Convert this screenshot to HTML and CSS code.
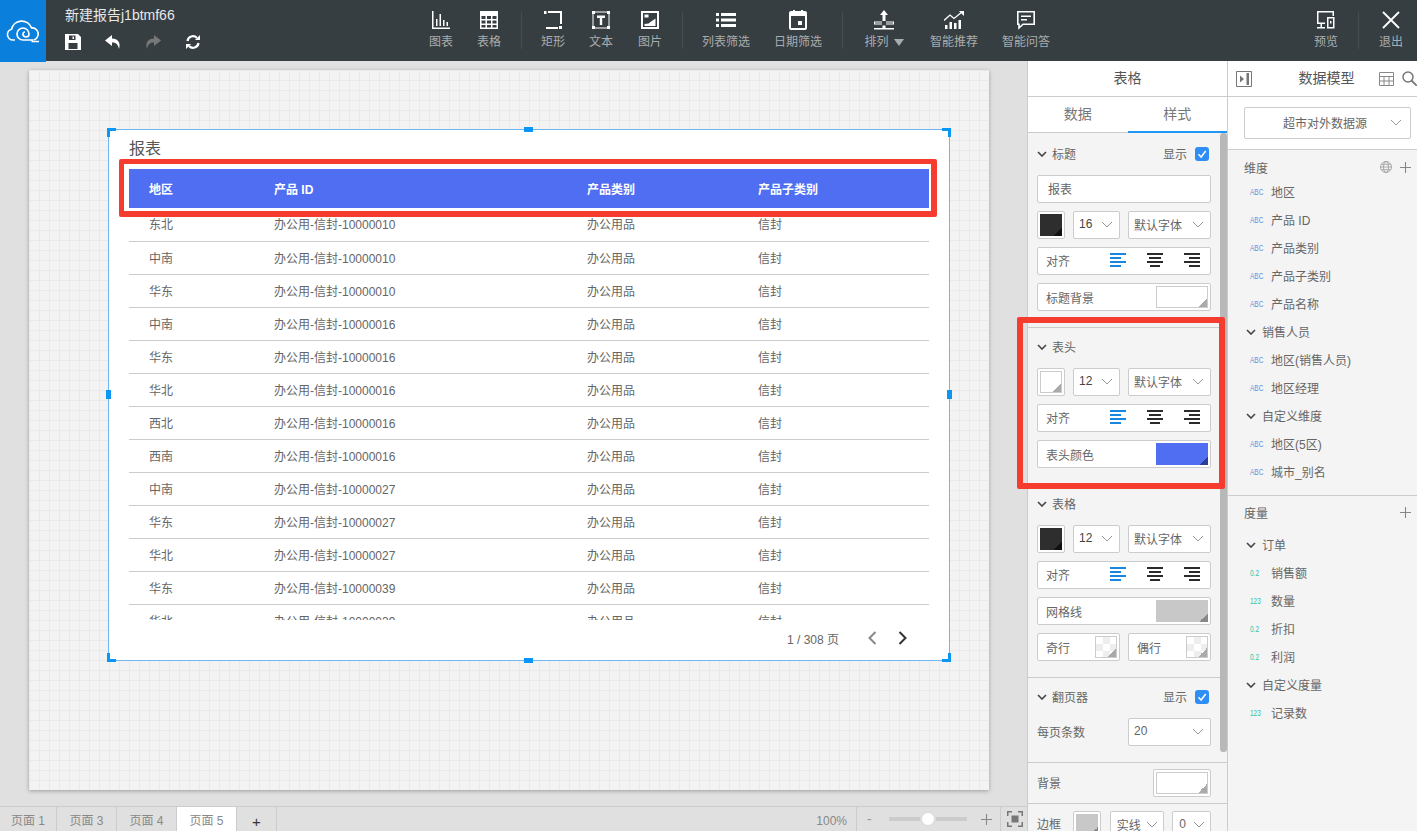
FILE: index.html
```html
<!DOCTYPE html>
<html lang="zh-CN">

<head>
  <meta charset="UTF-8">
  <title>新建报告j1btmf66</title>
  <link rel="stylesheet" href="styles.css">
</head>

<body>
  <!-- shared small icons -->
  <svg class="defs" width="0" height="0">
    <symbol id="chev" viewBox="0 0 12 7"><path d="M1 1l5 5 5-5" fill="none" stroke="#999" stroke-width="1"/></symbol>
    <symbol id="fold" viewBox="0 0 10 6"><path d="M1 1l4 4 4-4" fill="none" stroke="#444" stroke-width="1.6"/></symbol>
    <symbol id="al" viewBox="0 0 16 14"><path d="M0 0h16v2H0zM0 4h11v2H0zM0 8h16v2H0zM0 12h11v2H0z" fill="#1a86e0"/></symbol>
    <symbol id="ac" viewBox="0 0 16 14"><path d="M0 0h16v2H0zM2 4h12v2H2zM0 8h16v2H0zM3 12h10v2H3z" fill="#2b2b2b"/></symbol>
    <symbol id="ar" viewBox="0 0 16 14"><path d="M0 0h16v2H0zM5 4h11v2H5zM0 8h16v2H0zM5 12h11v2H5z" fill="#2b2b2b"/></symbol>
    <symbol id="tick" viewBox="0 0 14 14"><path d="M3.5 7.2l2.6 2.8 4.6-6" fill="none" stroke="#fff" stroke-width="1.5"/></symbol>
    <symbol id="plus" viewBox="0 0 13 13"><path d="M6.5 0v13M0 6.500h13" stroke="#888" stroke-width="1.300"/></symbol>
  </svg>

  <header class="topbar">
    <div class="logo">
      <svg width="34" height="24" viewBox="0 0 34 24" fill="none" stroke="#fff" stroke-width="1.700">
        <path d="M9 21H7A5.500 5.500 0 0 1 5.500 10.200 A10.500 10.500 0 0 1 25.500 8.800 A6.200 6.200 0 0 1 27.500 21"/>
        <path d="M33 22.500H25.500M27 21H17A6 6 0 1 1 23 15c0 1.900-1.400 3-3 3-1.800 0-3-1.300-3-2.900 0-1.300.9-2.100 2-2.100"/>
      </svg>
    </div>
    <div class="doc">
      <div class="doc-title">新建报告j1btmf66</div>
      <div class="doc-actions">
        <svg width="16" height="16" viewBox="0 0 16 16"><path d="M0 0h13l3 3v13H0z" fill="#fff"/><path d="M4 1.500h6.500v4.500H4zM3.500 9h9v6h-9z" fill="#363e42"/><path d="M7.500 2.500h1.500v2.500H7.500z" fill="#fff"/></svg>
        <svg width="16" height="16" viewBox="0 0 16 16"><path d="M7 1L0 6.500 7 12V8.500c4 0 6 1.500 7 6.500 2-6-1-10.500-7-10.500z" fill="#fff"/></svg>
        <svg width="16" height="16" viewBox="0 0 16 16"><path d="M9 1l7 5.500L9 12V8.500c-4 0-6 1.500-7 6.500C0 9 3 4.500 9 4.500z" fill="#777"/></svg>
        <svg width="16" height="16" viewBox="0 0 16 16" fill="none" stroke="#fff" stroke-width="2.200"><path d="M2.500 7a5.500 5.500 0 0 1 9.500-3M13.500 9a5.500 5.500 0 0 1-9.500 3"/><path d="M15 1v5h-5z M1 15v-5h5z" fill="#fff" stroke="none"/></svg>
      </div>
    </div>

    <div class="tool"><svg width="18" height="18" viewBox="0 0 18 18" fill="#fff"><path d="M0 0h1.500v16.500H18V18H0z"/><path d="M4 8h1.500v7H4zM7.500 3H9v12H7.500zM11 9h1.500v6H11zM14.500 11H16v4h-1.500z"/></svg><span>图表</span></div>
    <div class="tool"><svg width="18" height="18" viewBox="0 0 18 18"><path d="M0 0h18v18H0z" fill="#fff"/><path d="M1.500 5h4v3h-4zM7 5h4v3H7zM12.500 5h4v3h-4zM1.500 9.500h4v3h-4zM7 9.500h4v3H7zM12.500 9.500h4v3h-4zM1.500 14h4v2.500h-4zM7 14h4v2.500H7zM12.500 14h4v2.500h-4z" fill="#363e42"/></svg><span>表格</span></div>
    <i class="tool-sep"></i>
    <div class="tool"><svg width="18" height="18" viewBox="0 0 18 18" fill="#fff"><path d="M0 0h2.500v3H0zM0 4h2v14h12v-2H2V4zM4 0h14v13h-2V2H4zM15 15h3v3h-3z"/></svg><span>矩形</span></div>
    <div class="tool"><svg width="18" height="18" viewBox="0 0 18 18" fill="#fff"><path d="M1 1h16v16H1z" fill="none" stroke="#fff"/><path d="M0 0h3v3H0zM15 0h3v3h-3zM0 15h3v3H0zM15 15h3v3h-3zM5 4.500h8v2.500h-2.800v7H7.800V7H5z"/></svg><span>文本</span></div>
    <div class="tool tool-img"><svg width="18" height="18" viewBox="0 0 18 18"><path d="M0 0h18v18H0z" fill="#fff"/><path d="M2 2h14v14H2z" fill="#363e42"/><path d="M3.500 3.500h4v3h-4zM3.500 15h11V7.500l-5 3.500-2 1.500-4 .5z" fill="#fff"/></svg><span>图片</span></div>
    <i class="tool-sep"></i>
    <div class="tool tool-wide"><svg width="20" height="16" viewBox="0 0 20 16" fill="#fff"><path d="M0 1h3v3H0zM5 1h15v3H5zM0 6.500h3v3H0zM5 6.500h15v3H5zM0 12h3v3H0zM5 12h15v3H5z"/></svg><span>列表筛选</span></div>
    <div class="tool tool-wide"><svg width="18" height="20" viewBox="0 0 18 20"><path d="M2 1h2V0h2v1h6V0h2v1h2a2 2 0 0 1 2 2v15a2 2 0 0 1-2 2H2a2 2 0 0 1-2-2V3a2 2 0 0 1 2-2z" fill="#fff"/><path d="M2 6h14v12H2z" fill="#363e42"/><path d="M9 11h4v4H9z" fill="#fff"/></svg><span>日期筛选</span></div>
    <i class="tool-sep"></i>
    <div class="tool tool-sort"><svg width="20" height="20" viewBox="0 0 20 20" fill="#fff"><path d="M10 0l4 5h-2.500v6h-3V5H6zM0 11.500h8v1H1v1h7v1H0zM12 11.500h8v3h-8v-1h7v-1h-7zM8.500 15.500h3V18h8.500v1.500H0V18h8.500z"/></svg><span>排列<b class="caret"></b></span></div>
    <div class="tool tool-wide"><svg width="20" height="18" viewBox="0 0 20 18" fill="#fff"><path d="M1 14h2.500v4H1zM5.500 11H8v7H5.500zM10 12h2.500v6H10zM14.500 9H17v9h-2.500z"/><path d="M0 9.500l6-5.500 4 3.500L18 1" fill="none" stroke="#fff" stroke-width="1.300"/><path d="M15 0h5v5z"/></svg><span>智能推荐</span></div>
    <div class="tool tool-wide"><svg width="18" height="18" viewBox="0 0 18 18"><path d="M.8.800h16.400v12.400H6L2 17v-3.800H.8z" fill="none" stroke="#fff" stroke-width="1.600"/><path d="M4 4.500h10V6H4zM4 8h6v1.500H4z" fill="#fff"/></svg><span>智能问答</span></div>

    <div class="tool tool-preview"><svg width="18" height="18" viewBox="0 0 18 18" fill="#fff"><path d="M0 0h17v5h-1.500V1.500h-14v10H8V13H5v3h3v1.500H0V16h3.500v-3H0z"/><path d="M10 6h7.500v11.500H10zM11.500 7.500v8.500H16V7.500z"/><path d="M13 10h1.500v2.500H13z"/></svg><span>预览</span></div>
    <i class="tool-sep tool-sep-last"></i>
    <div class="tool tool-exit"><svg width="18" height="18" viewBox="0 0 18 18"><path d="M1 1l16 16M17 1L1 17" stroke="#fff" stroke-width="1.800"/></svg><span>退出</span></div>
  </header>

  <main class="main">
    <section class="workspace">
      <div class="stage">
        <div class="paper">
          <div class="widget">
            <i class="corner corner-tl"></i><i class="corner corner-tr"></i><i class="corner corner-bl"></i><i class="corner corner-br"></i>
            <i class="grip grip-t"></i><i class="grip grip-b"></i><i class="grip grip-l"></i><i class="grip grip-r"></i>
            <h2 class="report-title">报表</h2>
            <div class="table-clip">
              <table class="report">
                <colgroup><col class="c1"><col class="c2"><col class="c3"><col class="c4"></colgroup>
                <thead>
                  <tr><th>地区</th><th>产品 ID</th><th>产品类别</th><th>产品子类别</th></tr>
                </thead>
                <tbody>
                  <tr><td>东北</td><td>办公用-信封-10000010</td><td>办公用品</td><td>信封</td></tr>
                  <tr><td>中南</td><td>办公用-信封-10000010</td><td>办公用品</td><td>信封</td></tr>
                  <tr><td>华东</td><td>办公用-信封-10000010</td><td>办公用品</td><td>信封</td></tr>
                  <tr><td>中南</td><td>办公用-信封-10000016</td><td>办公用品</td><td>信封</td></tr>
                  <tr><td>华东</td><td>办公用-信封-10000016</td><td>办公用品</td><td>信封</td></tr>
                  <tr><td>华北</td><td>办公用-信封-10000016</td><td>办公用品</td><td>信封</td></tr>
                  <tr><td>西北</td><td>办公用-信封-10000016</td><td>办公用品</td><td>信封</td></tr>
                  <tr><td>西南</td><td>办公用-信封-10000016</td><td>办公用品</td><td>信封</td></tr>
                  <tr><td>中南</td><td>办公用-信封-10000027</td><td>办公用品</td><td>信封</td></tr>
                  <tr><td>华东</td><td>办公用-信封-10000027</td><td>办公用品</td><td>信封</td></tr>
                  <tr><td>华北</td><td>办公用-信封-10000027</td><td>办公用品</td><td>信封</td></tr>
                  <tr><td>华东</td><td>办公用-信封-10000039</td><td>办公用品</td><td>信封</td></tr>
                  <tr><td>华北</td><td>办公用-信封-10000039</td><td>办公用品</td><td>信封</td></tr>
                </tbody>
              </table>
            </div>
            <div class="pager">
              <span>1 / 308 页</span>
              <svg class="pager-prev" width="10" height="14" viewBox="0 0 10 14"><path d="M8.500 1l-6 6 6 6" fill="none" stroke="#888" stroke-width="2"/></svg>
              <svg class="pager-next" width="10" height="14" viewBox="0 0 10 14"><path d="M1.500 1l6 6-6 6" fill="none" stroke="#333" stroke-width="2"/></svg>
            </div>
          </div>
        </div>
      </div>
      <footer class="pages">
        <div class="page-tab">页面 1</div>
        <div class="page-tab">页面 3</div>
        <div class="page-tab">页面 4</div>
        <div class="page-tab page-on">页面 5</div>
        <div class="page-tab page-add">+</div>
        <div class="zoom-pct">100%</div>
        <div class="zoom-bar">
          <span class="zoom-sign">-</span>
          <div class="slider"><i class="knob"></i></div>
          <svg width="11" height="11"><use href="#plus"/></svg>
        </div>
        <div class="zoom-fit">
          <svg width="16" height="16" viewBox="0 0 16 16" fill="#777"><path d="M0 0h5v1.500H1.500V5H0zM11 0h5v5h-1.500V1.500H11zM0 11h1.500v3.500H5V16H0zM14.500 11H16v5h-5v-1.500h3.500zM4.500 4.500h7v7h-7z"/></svg>
        </div>
      </footer>
    </section>

    <aside class="props">
      <div class="panel-head">表格</div>
      <div class="tabs">
        <div class="tab">数据</div>
        <div class="tab tab-on">样式</div>
      </div>
      <div class="props-body">
        <i class="scroll"></i>

        <section class="group group-first">
          <div class="group-head">
            <svg class="fold" width="10" height="6"><use href="#fold"/></svg>标题
            <span class="show">显示</span><svg class="check" width="14" height="14"><use href="#tick"/></svg>
          </div>
          <div class="field field-text">报表</div>
          <div class="line">
            <div class="swatch"><i class="chip chip-dark"></i></div>
            <div class="field field-size">16<svg width="12" height="7"><use href="#chev"/></svg></div>
            <div class="field field-font">默认字体<svg width="12" height="7"><use href="#chev"/></svg></div>
          </div>
          <div class="field field-align">对齐
            <span class="aligns">
              <svg width="16" height="14"><use href="#al"/></svg>
              <svg width="16" height="14"><use href="#ac"/></svg>
              <svg width="16" height="14"><use href="#ar"/></svg>
            </span>
          </div>
          <div class="field field-color">标题背景<i class="chip chip-wide chip-white"></i></div>
        </section>

        <section class="group">
          <div class="group-head">
            <svg class="fold" width="10" height="6"><use href="#fold"/></svg>表头
          </div>
          <div class="line">
            <div class="swatch"><i class="chip chip-white"></i></div>
            <div class="field field-size">12<svg width="12" height="7"><use href="#chev"/></svg></div>
            <div class="field field-font">默认字体<svg width="12" height="7"><use href="#chev"/></svg></div>
          </div>
          <div class="field field-align">对齐
            <span class="aligns">
              <svg width="16" height="14"><use href="#al"/></svg>
              <svg width="16" height="14"><use href="#ac"/></svg>
              <svg width="16" height="14"><use href="#ar"/></svg>
            </span>
          </div>
          <div class="field field-color">表头颜色<i class="chip chip-wide chip-blue"></i></div>
        </section>

        <section class="group">
          <div class="group-head">
            <svg class="fold" width="10" height="6"><use href="#fold"/></svg>表格
          </div>
          <div class="line">
            <div class="swatch"><i class="chip chip-dark"></i></div>
            <div class="field field-size">12<svg width="12" height="7"><use href="#chev"/></svg></div>
            <div class="field field-font">默认字体<svg width="12" height="7"><use href="#chev"/></svg></div>
          </div>
          <div class="field field-align">对齐
            <span class="aligns">
              <svg width="16" height="14"><use href="#al"/></svg>
              <svg width="16" height="14"><use href="#ac"/></svg>
              <svg width="16" height="14"><use href="#ar"/></svg>
            </span>
          </div>
          <div class="field field-color">网格线<i class="chip chip-wide chip-grey"></i></div>
          <div class="line">
            <div class="field field-half">奇行<i class="chip chip-check"></i></div>
            <div class="field field-half">偶行<i class="chip chip-check"></i></div>
          </div>
        </section>

        <section class="group">
          <div class="group-head">
            <svg class="fold" width="10" height="6"><use href="#fold"/></svg>翻页器
            <span class="show">显示</span><svg class="check" width="14" height="14"><use href="#tick"/></svg>
          </div>
          <div class="line line-between">
            <span class="plain">每页条数</span>
            <div class="field field-font">20<svg width="12" height="7"><use href="#chev"/></svg></div>
          </div>
        </section>

        <section class="group group-tight">
          <div class="line line-between">
            <span class="plain">背景</span>
            <div class="swatch swatch-wide"><i class="chip chip-white"></i></div>
          </div>
        </section>

        <section class="group group-tight group-last">
          <div class="line">
            <span class="plain plain-border">边框</span>
            <div class="swatch"><i class="chip chip-grey"></i></div>
            <div class="field field-style">实线<svg width="12" height="7"><use href="#chev"/></svg></div>
            <div class="field field-width">0<svg width="12" height="7"><use href="#chev"/></svg></div>
          </div>
        </section>
      </div>
    </aside>

    <aside class="model">
      <div class="panel-head model-head">
        <svg class="model-toggle" width="16" height="16" viewBox="0 0 16 16"><path d="M.5.500h15v15H.5z" fill="none" stroke="#777"/><path d="M4 4.500l4 3.500-4 3.500zM10.500 2H13v12h-2.500z" fill="#777"/></svg>
        <span class="model-title">数据模型</span>
        <svg class="model-grid" width="15" height="14" viewBox="0 0 15 14"><path d="M.5.500h14v13H.5zM.5 4.500h14M.5 9h14M5 4.500V13.500M10 4.500V13.500" fill="none" stroke="#888"/></svg>
        <svg class="model-search" width="15" height="15" viewBox="0 0 15 15"><circle cx="6" cy="6" r="5" fill="none" stroke="#777" stroke-width="1.500"/><path d="M9.500 9.500L15 15" stroke="#777" stroke-width="1.800"/></svg>
      </div>
      <div class="source">
        <div class="source-select">超市对外数据源<svg width="12" height="7"><use href="#chev"/></svg></div>
      </div>
      <section class="tree tree-dim">
        <div class="tree-head">维度
          <svg class="globe" width="12" height="12" viewBox="0 0 12 12"><g fill="none" stroke="#999" stroke-width=".8"><circle cx="6" cy="6" r="5.500"/><ellipse cx="6" cy="6" rx="2.500" ry="5.500"/><path d="M.5 6h11M1.300 3.300h9.400M1.300 8.700h9.400"/></g></svg>
          <svg width="11" height="11"><use href="#plus"/></svg>
        </div>
        <div class="leaf"><i class="abc">ABC</i>地区</div>
        <div class="leaf"><i class="abc">ABC</i>产品 ID</div>
        <div class="leaf"><i class="abc">ABC</i>产品类别</div>
        <div class="leaf"><i class="abc">ABC</i>产品子类别</div>
        <div class="leaf"><i class="abc">ABC</i>产品名称</div>
        <div class="branch"><svg width="10" height="6"><use href="#fold"/></svg>销售人员</div>
        <div class="leaf"><i class="abc">ABC</i>地区(销售人员)</div>
        <div class="leaf"><i class="abc">ABC</i>地区经理</div>
        <div class="branch"><svg width="10" height="6"><use href="#fold"/></svg>自定义维度</div>
        <div class="leaf"><i class="abc">ABC</i>地区(5区)</div>
        <div class="leaf"><i class="abc">ABC</i>城市_别名</div>
      </section>
      <section class="tree tree-measure">
        <div class="tree-head">度量
          <svg width="11" height="11"><use href="#plus"/></svg>
        </div>
        <div class="branch"><svg width="10" height="6"><use href="#fold"/></svg>订单</div>
        <div class="leaf"><i class="abc abc-num">0.2</i>销售额</div>
        <div class="leaf"><i class="abc abc-num">123</i>数量</div>
        <div class="leaf"><i class="abc abc-num">0.2</i>折扣</div>
        <div class="leaf"><i class="abc abc-num">0.2</i>利润</div>
        <div class="branch"><svg width="10" height="6"><use href="#fold"/></svg>自定义度量</div>
        <div class="leaf"><i class="abc abc-num">123</i>记录数</div>
      </section>
    </aside>
  </main>

  <!-- red annotations drawn over the screenshot -->
  <i class="mark mark-header"></i>
  <i class="mark mark-props"></i>
</body>

</html>
```

FILE: styles.css
```css
* {
  margin: 0;
  padding: 0;
  box-sizing: border-box;
}

html,
body {
  height: 831px;
  overflow: hidden;
}

body {
  position: relative;
  display: flex;
  flex-direction: column;
  font-family: "Liberation Sans", "Noto Sans CJK SC", sans-serif;
  font-size: 12px;
  color: #666;
  background: #e0e0e0;
}

i {
  font-style: normal;
}

svg {
  display: block;
  flex: none;
}

.defs {
  position: absolute;
}

/* top bar */
.topbar {
  position: relative;
  z-index: 2;
  flex: none;
  display: flex;
  align-items: flex-start;
  height: 61px;
  background: #363e42;
}

.logo {
  flex: none;
  display: flex;
  align-items: center;
  justify-content: center;
  width: 46px;
  height: 62px;
  background: #0a7fdc;
}

.doc {
  flex: none;
  width: 371px;
  padding: 8px 0 0 19px;
}

.doc-title {
  font-size: 14px;
  line-height: 15px;
  color: #e8e8e8;
}

.doc-actions {
  display: flex;
  gap: 24px;
  margin-top: 11px;
}

.tool {
  flex: none;
  display: flex;
  flex-direction: column;
  align-items: center;
  width: 48px;
  height: 61px;
  color: #a9adae;
}

.tool svg {
  height: 20px;
  margin-top: 10px;
}

.tool span {
  margin-top: 4px;
  line-height: 16px;
}

.tool-img {
  margin-left: 1px;
}

.tool-wide {
  width: 72px;
}

.tool-sort {
  width: 68px;
}

.tool-preview {
  width: 64px;
  margin-left: auto;
}

.tool-exit {
  width: 52px;
  margin-left: 6px;
}

.tool-sep {
  flex: none;
  width: 1px;
  height: 37px;
  margin: 12px 7px 0 8px;
  background: #464e52;
}

.tool-sep-last {
  margin: 12px 0 0;
}

.caret {
  display: inline-block;
  margin-left: 5px;
  border-top: 7px solid #a9adae;
  border-left: 5px solid transparent;
  border-right: 5px solid transparent;
}

/* layout */
.main {
  flex: 1;
  display: flex;
  min-height: 0;
}

.workspace {
  flex: none;
  display: flex;
  flex-direction: column;
  width: 1027px;
}

.stage {
  flex: 1;
  padding: 9px 0 0 29px;
  overflow: hidden;
}

.paper {
  position: relative;
  width: 960px;
  height: 720px;
  background-color: #f3f3f3;
  background-image:
    linear-gradient(#e9e9e9 1px, transparent 1px),
    linear-gradient(90deg, #e9e9e9 1px, transparent 1px);
  background-size: 10px 10px;
  box-shadow: 0 1px 4px rgba(0, 0, 0, .3);
}

/* report widget, free placed on the paper */
.widget {
  position: absolute;
  left: 79px;
  top: 59px;
  width: 842px;
  height: 532px;
  padding: 0 20px;
  background: #fff;
  border: 1px solid #6db8f2;
}

.corner {
  position: absolute;
  width: 9px;
  height: 9px;
  border: 0 solid #0a96f5;
}

.corner-tl {
  left: -2px;
  top: -2px;
  border-width: 3px 0 0 3px;
}

.corner-tr {
  right: -2px;
  top: -2px;
  border-width: 3px 3px 0 0;
}

.corner-bl {
  left: -2px;
  bottom: -2px;
  border-width: 0 0 3px 3px;
}

.corner-br {
  right: -2px;
  bottom: -2px;
  border-width: 0 3px 3px 0;
}

.grip {
  position: absolute;
  background: #0a96f5;
}

.grip-t,
.grip-b {
  left: 415px;
  width: 9px;
  height: 5px;
}

.grip-t {
  top: -3px;
}

.grip-b {
  bottom: -3px;
}

.grip-l,
.grip-r {
  top: 260px;
  width: 5px;
  height: 9px;
}

.grip-l {
  left: -3px;
}

.grip-r {
  right: -3px;
}

.report-title {
  height: 39px;
  padding-top: 9px;
  font-size: 16px;
  font-weight: normal;
  line-height: 20px;
  color: #555;
}

.table-clip {
  height: 451px;
  overflow: hidden;
}

.report {
  width: 800px;
  table-layout: fixed;
  border-collapse: collapse;
}

.c1 {
  width: 145px;
}

.c2 {
  width: 313px;
}

.c3,
.c4 {
  width: 171px;
}

.report th {
  height: 39px;
  padding-left: 20px;
  font-weight: bold;
  text-align: left;
  color: #fff;
  background: #4f6ef2;
}

.report th+th,
.report td+td {
  padding-left: 0;
}

.report td {
  height: 33px;
  padding: 0 0 1px 20px;
  color: #666;
  border-bottom: 1px solid #ccc;
}

.pager {
  display: flex;
  align-items: center;
  justify-content: flex-end;
  height: 38px;
  padding-bottom: 2px;
  color: #666;
}

.pager-prev {
  margin-left: 28px;
}

.pager-next {
  margin: 0 21px 0 21px;
}

/* page tabs */
.pages {
  flex: none;
  display: flex;
  height: 25px;
  background: #e0e0e0;
  border-top: 1px solid #ccc;
}

.page-tab {
  width: 60px;
  line-height: 29px;
  text-align: center;
  color: #888;
  border-right: 1px solid #ccc;
}

.page-tab:first-child {
  width: 57px;
}

.page-on {
  background: #fff;
}

.page-add {
  width: 40px;
  font-size: 15px;
  color: #333;
}

.zoom-pct {
  width: 580px;
  padding-right: 9px;
  line-height: 28px;
  text-align: right;
  color: #888;
  border-right: 1px solid #ccc;
}

.zoom-bar {
  display: flex;
  align-items: center;
  width: 144px;
  padding-left: 10px;
  border-right: 1px solid #ccc;
}

.zoom-sign {
  width: 22px;
  font-size: 14px;
  color: #999;
}

.slider {
  position: relative;
  width: 78px;
  height: 4px;
  margin-right: 14px;
  background: #ccc;
}

.knob {
  position: absolute;
  left: 31px;
  top: -6px;
  width: 16px;
  height: 16px;
  border: 2px solid #ddd;
  border-radius: 50%;
  background: #fff;
}

.zoom-fit {
  padding: 4px 0 0 6px;
}

/* property panel */
.props {
  flex: none;
  display: flex;
  flex-direction: column;
  width: 200px;
  border-left: 1px solid #ccc;
  background: #fff;
  overflow: hidden;
}

.panel-head {
  flex: none;
  height: 36px;
  line-height: 35px;
  font-size: 14px;
  text-align: center;
  color: #555;
  background: #fff;
  border-bottom: 1px solid #ccc;
}

.tabs {
  flex: none;
  display: flex;
  height: 36px;
  border-bottom: 1px solid #ccc;
}

.tab {
  flex: 1;
  line-height: 34px;
  font-size: 14px;
  text-align: center;
  color: #777;
}

.tab-on {
  height: 36px;
  border-bottom: 2px solid #2196f3;
}

.props-body {
  position: relative;
  flex: 1;
  background: #f4f4f4;
}

.scroll {
  position: absolute;
  z-index: 1;
  right: 0;
  top: 0;
  width: 7px;
  height: 619px;
  border-radius: 3px;
  background: #b8b8b8;
}

.group {
  display: flex;
  flex-direction: column;
  gap: 8px;
  padding: 8px 16px 16px 9px;
  border-bottom: 1px solid #ccc;
}

.group-first {
  padding-top: 10px;
}

.group-tight {
  padding: 6px 16px 6px 9px;
}

.group-last {
  padding-top: 7px;
  border-bottom: 0;
}

.group-head {
  display: flex;
  align-items: center;
  height: 22px;
  margin-bottom: 2px;
  padding-bottom: 1px;
  color: #666;
}

.fold {
  margin: 0 5px 0 0;
}

.show {
  margin-left: auto;
  margin-right: 8px;
}

.check {
  margin-right: 2px;
  border-radius: 3px;
  background: #2f8ef5;
}

.line {
  display: flex;
  gap: 8px;
}

.line-between {
  align-items: center;
  justify-content: space-between;
}

.plain {
  padding-bottom: 2px;
  color: #666;
}

.field {
  display: flex;
  align-items: center;
  height: 28px;
  padding: 0 0 2px 8px;
  background: #fff;
  border: 1px solid #ccc;
  border-radius: 2px;
  color: #666;
}

.field svg {
  margin-left: auto;
}

.field-text {
  padding-left: 10px;
}

.field-size {
  width: 47px;
  padding: 0 6px 2px 5px;
  color: #444;
}

.field-font {
  width: 83px;
  padding: 0 6px 2px 5px;
}

.field-align {
  justify-content: space-between;
}

.aligns {
  display: flex;
  gap: 21px;
  margin-right: 10px;
}

.field-align .aligns svg {
  margin: 0;
}

.field-color {
  justify-content: space-between;
  padding: 0 2px 0 8px;
}

.field-half {
  flex: 1;
  justify-content: space-between;
  padding: 0 2px 0 8px;
}

.field-style {
  width: 55px;
  padding: 0 5px 2px 6px;
  margin-left: 1px;
}

.field-width {
  width: 39px;
  padding: 0 5px 2px 6px;
}

.plain-border {
  width: 28px;
  line-height: 28px;
}

.swatch {
  flex: none;
  display: flex;
  width: 28px;
  height: 28px;
  padding: 2px;
  background: #fff;
  border: 1px solid #ccc;
  border-radius: 2px;
}

.swatch-wide {
  width: 58px;
}

.chip {
  flex: 1;
  display: block;
  height: 22px;
}

.chip-wide {
  flex: none;
  width: 52px;
}

.chip-dark {
  background: linear-gradient(135deg, transparent 50%, #111 50%) right bottom / 9px 9px no-repeat, #2e2e2e;
}

.chip-white {
  border: 1px solid #ccc;
  background: linear-gradient(135deg, transparent 50%, #aaa 50%) right bottom / 9px 9px no-repeat, #fff;
}

.chip-blue {
  background: linear-gradient(135deg, transparent 50%, #2c3f96 50%) right bottom / 9px 9px no-repeat, #4f6ef2;
}

.chip-grey {
  background: linear-gradient(135deg, transparent 50%, #888 50%) right bottom / 9px 9px no-repeat, #c8c8c8;
}

.chip-check {
  flex: none;
  width: 22px;
  border: 1px solid #ccc;
  background:
    linear-gradient(135deg, transparent 50%, #aaa 50%) right bottom / 9px 9px no-repeat,
    repeating-conic-gradient(#eee 0 25%, #fff 0 50%) 0 0 / 14px 14px;
}

/* data model panel */
.model {
  flex: 1;
  display: flex;
  flex-direction: column;
  border-left: 1px solid #ccc;
  background: #f4f4f4;
  overflow: hidden;
}

.model-head {
  display: flex;
  align-items: center;
  padding-left: 8px;
}

.model-title {
  width: 106px;
  margin-left: 22px;
  text-align: center;
}

.model-search {
  margin-left: 8px;
}

.source {
  flex: none;
  height: 53px;
  padding: 10px 6px 0 16px;
  background: #fff;
  border-bottom: 1px solid #ccc;
}

.source-select {
  display: flex;
  align-items: center;
  height: 32px;
  padding: 0 8px 2px 38px;
  color: #666;
  border: 1px solid #ccc;
  border-radius: 2px;
}

.source-select svg {
  margin-left: auto;
}

.tree-dim {
  padding: 7px 0 8px;
  border-bottom: 1px solid #ccc;
}

.tree-measure {
  padding-top: 6px;
}

.tree-head {
  display: flex;
  align-items: center;
  gap: 8px;
  height: 22px;
  padding: 0 6px 2px 16px;
}

.tree-measure .tree-head {
  margin-bottom: 8px;
}

.tree-head svg:first-of-type {
  margin-left: auto;
}

.leaf,
.branch {
  display: flex;
  align-items: center;
  height: 28px;
  padding-bottom: 3px;
  color: #666;
}

.leaf {
  padding-left: 22px;
}

.branch {
  gap: 6px;
  padding-left: 18px;
}

.abc {
  width: 21px;
  font-size: 9px;
  color: #5b93e0;
  transform: scaleX(.72);
  transform-origin: left center;
}

.abc-num {
  color: #35c3a5;
}

/* red annotation boxes */
.mark {
  position: absolute;
  z-index: 3;
  border: 6px solid #f63b2f;
  border-radius: 2px;
}

.mark-header {
  left: 119px;
  top: 159px;
  width: 818px;
  height: 58px;
  border-width: 5px 6px 6px 5px;
}

.mark-props {
  left: 1017px;
  top: 317px;
  width: 208px;
  height: 172px;
}
```
